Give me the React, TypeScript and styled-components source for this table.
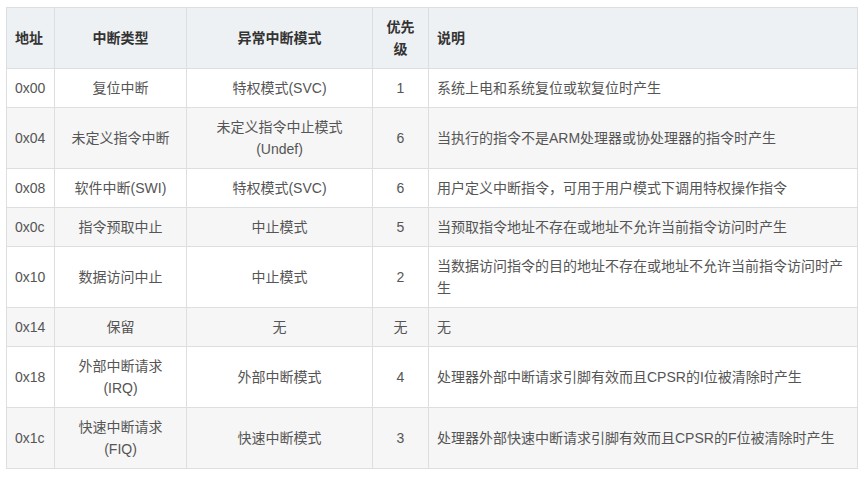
import React from "react";
import styled, { createGlobalStyle } from "styled-components";

const GlobalStyle = createGlobalStyle`
    body {
        margin: 0;
        background: #ffffff;
        font-family: "Liberation Sans", "Noto Sans CJK SC", sans-serif;
    }
`

interface RowData {
    addr: string;
    type: string;
    mode: string;
    priority: string;
    desc: string;
}

const rows: RowData[] = [
    { addr: "0x00", type: "复位中断", mode: "特权模式(SVC)", priority: "1", desc: "系统上电和系统复位或软复位时产生" },
    { addr: "0x04", type: "未定义指令中断", mode: "未定义指令中止模式(Undef)", priority: "6", desc: "当执行的指令不是ARM处理器或协处理器的指令时产生" },
    { addr: "0x08", type: "软件中断(SWI)", mode: "特权模式(SVC)", priority: "6", desc: "用户定义中断指令，可用于用户模式下调用特权操作指令" },
    { addr: "0x0c", type: "指令预取中止", mode: "中止模式", priority: "5", desc: "当预取指令地址不存在或地址不允许当前指令访问时产生" },
    { addr: "0x10", type: "数据访问中止", mode: "中止模式", priority: "2", desc: "当数据访问指令的目的地址不存在或地址不允许当前指令访问时产生" },
    { addr: "0x14", type: "保留", mode: "无", priority: "无", desc: "无" },
    { addr: "0x18", type: "外部中断请求(IRQ)", mode: "外部中断模式", priority: "4", desc: "处理器外部中断请求引脚有效而且CPSR的I位被清除时产生" },
    { addr: "0x1c", type: "快速中断请求(FIQ)", mode: "快速中断模式", priority: "3", desc: "处理器外部快速中断请求引脚有效而且CPSR的F位被清除时产生" },
];

const Page = styled.div`
    padding: 7px 0 0 6px;
`

const Table = styled.table`
    border-collapse: collapse;
    table-layout: fixed;
    width: 852px;
    font-size: 14px;
    line-height: 22px;
    color: #555555;
`

const HeadCell = styled.th<{ $align?: string }>`
    background-color: #eef1f4;
    border: 1px solid #dcdfe2;
    padding: 8px 8px;
    font-weight: bold;
    color: #333;
    text-align: ${p => p.$align || "center"};
`

const Row = styled.tr<{ $striped: boolean }>`
    background-color: ${p => (p.$striped ? "#f6f6f6" : "#ffffff")};
`

const Cell = styled.td<{ $align?: string }>`
    border: 1px solid #dcdfe2;
    padding: 8px 8px;
    text-align: ${p => p.$align || "center"};
    vertical-align: middle;
`

export default function App() {
    return (
        <Page>
            <GlobalStyle />
            <Table>
                <colgroup>
                    <col style={{ width: "48px" }} />
                    <col style={{ width: "132px" }} />
                    <col style={{ width: "186px" }} />
                    <col style={{ width: "56px" }} />
                    <col />
                </colgroup>
                <thead>
                    <tr>
                        <HeadCell $align="left">地址</HeadCell>
                        <HeadCell>中断类型</HeadCell>
                        <HeadCell>异常中断模式</HeadCell>
                        <HeadCell>优先级</HeadCell>
                        <HeadCell $align="left">说明</HeadCell>
                    </tr>
                </thead>
                <tbody>
                    {rows.map((r, i) => (
                        <Row key={r.addr} $striped={i % 2 === 1}>
                            <Cell $align="left">{r.addr}</Cell>
                            <Cell>{r.type}</Cell>
                            <Cell>{r.mode}</Cell>
                            <Cell>{r.priority}</Cell>
                            <Cell $align="left">{r.desc}</Cell>
                        </Row>
                    ))}
                </tbody>
            </Table>
        </Page>
    );
}
